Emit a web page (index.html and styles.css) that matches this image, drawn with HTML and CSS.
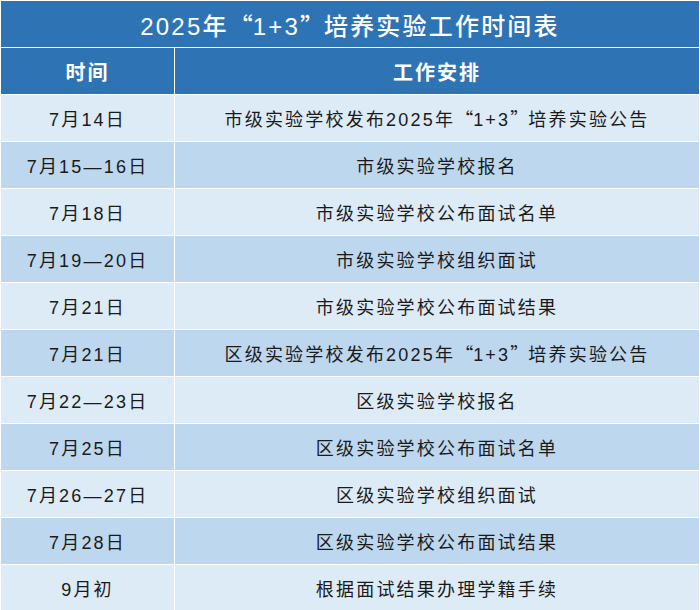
FILE: index.html
```html
<!DOCTYPE html>
<html lang="zh-CN">
<head>
<meta charset="utf-8">
<title>2025年“1+3”培养实验工作时间表</title>
<link rel="stylesheet" href="styles.css">
</head>
<body>
<table class="schedule">
  <colgroup>
    <col class="col-time">
    <col class="col-work">
  </colgroup>
  <thead>
    <tr><th class="title" colspan="2">2025年<span class="q">“</span>1+3<span class="q">”</span>培养实验工作时间表</th></tr>
    <tr class="head"><th>时间</th><th>工作安排</th></tr>
  </thead>
  <tbody>
    <tr><td>7月14日</td><td>市级实验学校发布2025年<span class="q">“</span>1+3<span class="q">”</span>培养实验公告</td></tr>
    <tr><td>7月15—16日</td><td>市级实验学校报名</td></tr>
    <tr><td>7月18日</td><td>市级实验学校公布面试名单</td></tr>
    <tr><td>7月19—20日</td><td>市级实验学校组织面试</td></tr>
    <tr><td>7月21日</td><td>市级实验学校公布面试结果</td></tr>
    <tr><td>7月21日</td><td>区级实验学校发布2025年<span class="q">“</span>1+3<span class="q">”</span>培养实验公告</td></tr>
    <tr><td>7月22—23日</td><td>区级实验学校报名</td></tr>
    <tr><td>7月25日</td><td>区级实验学校公布面试名单</td></tr>
    <tr><td>7月26—27日</td><td>区级实验学校组织面试</td></tr>
    <tr><td>7月28日</td><td>区级实验学校公布面试结果</td></tr>
    <tr><td>9月初</td><td>根据面试结果办理学籍手续</td></tr>
  </tbody>
</table>
</body>
</html>
```

FILE: styles.css
```css
html, body {
  margin: 0;
  padding: 0;
  background: #ffffff;
}

.schedule {
  width: 700px;
  border-collapse: collapse;
  table-layout: fixed;
  font-family: "Liberation Sans", "Noto Sans CJK SC", sans-serif;
}

.col-time {
  width: 174px;
}

.schedule th,
.schedule td {
  border: 1px solid #ffffff;
  text-align: center;
  vertical-align: middle;
  padding: 0;
  height: 46px;
  white-space: nowrap;
}

.q {
  font-family: "Noto Sans CJK SC", sans-serif;
  display: inline-block;
  width: 1em;
  text-align: center;
}

.title {
  background: #2e74b5;
  color: #ffffff;
  font-size: 24px;
  font-weight: 500;
  letter-spacing: 2.2px;
}

.head th {
  background: #2e74b5;
  color: #ffffff;
  font-size: 20px;
  font-weight: 700;
  letter-spacing: 2px;
}

.schedule td {
  font-size: 18px;
  color: #1a1a1a;
  letter-spacing: 2.2px;
}

.schedule tbody tr:nth-child(odd) td {
  background: #ddebf7;
}

.schedule tbody tr:nth-child(even) td {
  background: #bdd7ee;
}
```
